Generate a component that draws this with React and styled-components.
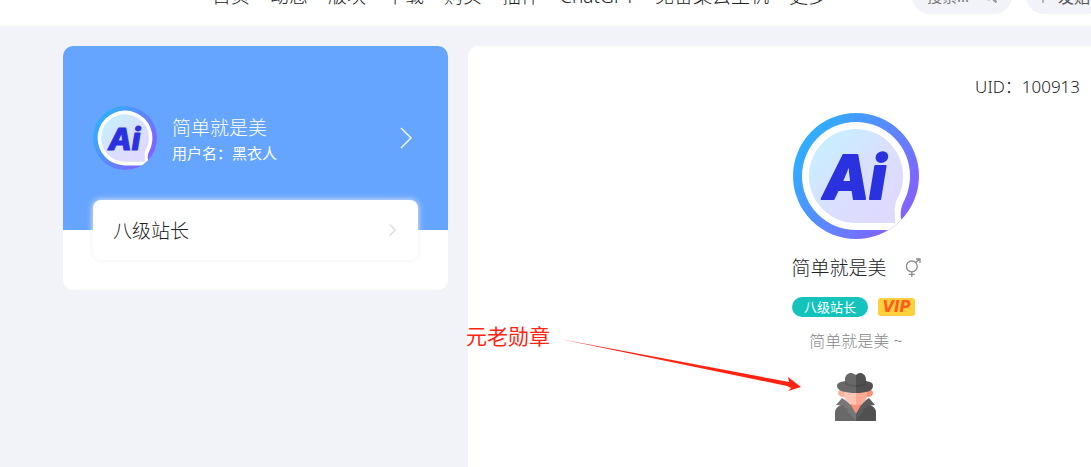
import React from 'react';
import styled, { createGlobalStyle } from 'styled-components';
import { FaSearch } from 'react-icons/fa';
import { BsFlag } from 'react-icons/bs';

const NAV = ['首页', '动态', '版块', '下载', '购买', '插件', 'ChatGPT', '免备案云主机', '更多'];

export default function App() {
    return (
        <Page>
            <GlobalStyle />
            <Header>
                <Nav>
                    {NAV.map((name) => (
                        <NavLink href="#" key={name}>
                            {name}
                        </NavLink>
                    ))}
                </Nav>
                <SearchBox>
                    <SearchInput type="text" placeholder="搜索..." aria-label="搜索" />
                    <FaSearch size="14px" />
                </SearchBox>
                <PostButton type="button">
                    <BsFlag size="13px" />
                    发贴
                </PostButton>
            </Header>
            <Main>
                <UserCard>
                    <UserTop href="#">
                        <Avatar size={64} id="small" />
                        <UserText>
                            <UserName>简单就是美</UserName>
                            <UserAccount>用户名：黑衣人</UserAccount>
                        </UserText>
                        <Chevron width={12} height={22} color="#fff" />
                    </UserTop>
                    <LevelLink href="#">
                        八级站长
                        <Chevron width={7} height={12} color="#ddd" />
                    </LevelLink>
                </UserCard>
                <Profile>
                    <Uid>UID：100913</Uid>
                    <Avatar size={126} id="large" />
                    <NameRow>
                        简单就是美
                        <GenderIcon />
                    </NameRow>
                    <BadgeRow>
                        <Level>八级站长</Level>
                        <Vip>VIP</Vip>
                    </BadgeRow>
                    <Signature>简单就是美 ~</Signature>
                    <Medal />
                    <Note>
                        元老勋章
                        <Arrow />
                    </Note>
                </Profile>
            </Main>
        </Page>
    );
}

function Avatar({ size, id }) {
    return (
        <svg width={size} height={size} viewBox="0 0 126 126" role="img" aria-label="头像">
            <defs>
                <linearGradient id={`ring-${id}`} x1="0.1" y1="0.2" x2="0.9" y2="0.75">
                    <stop offset="0" stopColor="#2fafff" />
                    <stop offset="0.55" stopColor="#5d86ff" />
                    <stop offset="1" stopColor="#8163ff" />
                </linearGradient>
                <linearGradient id={`face-${id}`} x1="0.1" y1="0.1" x2="0.8" y2="0.8">
                    <stop offset="0" stopColor="#c6f0ff" />
                    <stop offset="0.6" stopColor="#d9dfff" />
                    <stop offset="1" stopColor="#dedaff" />
                </linearGradient>
                <clipPath id={`clip-${id}`}>
                    <circle cx="63" cy="63" r="63" />
                </clipPath>
            </defs>
            <g clipPath={`url(#clip-${id})`}>
                <rect width="126" height="126" fill={`url(#ring-${id})`} />
                <path
                    d="M63 9A54 54 0 0 0 63 117H112L108 105C107 97 109 92 112 86C115 80 117 71 117 63A54 54 0 0 0 63 9Z"
                    fill="#fff"
                />
                <path
                    d="M63 16A47 47 0 0 0 63 110H102V101C101 93 103 88 106 82C109 76 110 70 110 63A47 47 0 0 0 63 16Z"
                    fill={`url(#face-${id})`}
                />
                <LogoText x="30" y="86">
                    Ai
                </LogoText>
            </g>
        </svg>
    );
}

function Chevron({ width, height, color }) {
    return (
        <svg width={width} height={height} viewBox="0 0 12 22" fill="none" stroke={color} strokeWidth="1.4">
            <path d="M1 1L11 11L1 21" vectorEffect="non-scaling-stroke" />
        </svg>
    );
}

function GenderIcon() {
    return (
        <svg width="16" height="20" viewBox="0 0 16 20" fill="none" stroke="#8c8c8c" strokeWidth="1.3">
            <circle cx="6.8" cy="8.4" r="5.4" />
            <path d="M10.6 4.6L14.6 1.2M11 1H15V5M6.8 13.8V19M3.8 16.4H9.8" />
        </svg>
    );
}

function Medal() {
    return (
        <svg width="42" height="48" viewBox="0 0 42 48" role="img" aria-label="元老勋章">
            <path d="M0 48V40C0 36 2 34 6 32L12 29L21 40V48Z" fill="#686868" />
            <path d="M41 48V40C41 36 39 34 35 32L29 29L21 40V48Z" fill="#505050" />
            <ellipse cx="8" cy="20" rx="5" ry="4" fill="#ffb09b" />
            <ellipse cx="33" cy="20" rx="5" ry="4" fill="#fb8f78" />
            <path d="M15 28H27L26 33L21 41L16 33Z" fill="#fb8f78" />
            <path d="M9 15H21V32C14 32 9 27 9 22Z" fill="#ffc4b3" />
            <path d="M32 15H21V32C27 32 32 27 32 22Z" fill="#ffaa94" />
            <path d="M7 25L10 27L16 32L21 41V47L12 38L14 36L9 35L10 33L1 32Z" fill="#777" />
            <path d="M34 25L31 27L26 32L21 41V47L29 38L27 36L32 35L31 33L40 32Z" fill="#5c5c5c" />
            <path d="M2 13C2 10 5 9 10 8V7C10 2 13 0 16 0C18 0 19 1 21 2V20C11 20 2 18 2 13Z" fill="#686868" />
            <path d="M38 13C38 10 36 9 31 8V7C31 2 28 0 25 0C23 0 22 1 21 2V20C31 20 38 18 38 13Z" fill="#505050" />
            <path d="M10 8C13 11 17 12 21 12V14C16 14 12 13 10 11Z" fill="#5c5c5c" />
            <path d="M31 8C28 11 25 12 21 12V14C26 14 29 13 31 11Z" fill="#474747" />
        </svg>
    );
}

function Arrow() {
    return (
        <svg width="242" height="54" viewBox="0 0 242 54" fill="#ff2412">
            <path d="M0 0L229 43L228 38L241 48L228 52L231 49L227 47Z" />
        </svg>
    );
}

const GlobalStyle = createGlobalStyle`
    * {
        box-sizing: border-box;
    }
    body {
        margin: 0;
        overflow: hidden;
        background: #f2f3f8;
        color: #222;
        font-family: 'Noto Sans', 'Noto Sans CJK SC', sans-serif;
    }
    a {
        color: inherit;
        text-decoration: none;
    }
    svg {
        display: block;
        flex: none;
    }
`;

const Page = styled.div`
    display: flex;
    flex-direction: column;
    min-height: 100vh;
`;

const Header = styled.header`
    display: flex;
    align-items: center;
    height: 60px;
    margin-top: -34px;
    padding-left: 212px;
    background: #fff;
    white-space: nowrap;
`;

const Nav = styled.nav`
    display: flex;
    flex: none;
    gap: 20px;
    width: 700px;
`;

const NavLink = styled.a`
    font-size: 19px;
    font-weight: 300;
    line-height: 28px;
`;

const SearchBox = styled.div`
    display: flex;
    flex: none;
    align-items: center;
    width: 100px;
    height: 36px;
    margin-right: 14px;
    padding: 0 15px;
    border-radius: 18px;
    background: #f2f3f8;
    color: #999;
`;

const SearchInput = styled.input`
    flex: 1;
    min-width: 0;
    padding: 0;
    border: none;
    background: none;
    font-family: inherit;
    font-size: 15px;
    &::placeholder {
        color: #777;
    }
`;

const PostButton = styled.button`
    display: flex;
    flex: none;
    align-items: center;
    gap: 4px;
    height: 36px;
    padding: 0 15px;
    border: none;
    border-radius: 18px;
    background: #f2f3f8;
    color: #555;
    font-family: inherit;
    font-size: 16px;
`;

const Main = styled.main`
    display: grid;
    flex: 1;
    grid-template-columns: 385px minmax(776px, 1fr);
    align-items: start;
    gap: 20px;
    padding: 20px 63px 0;
`;

const UserCard = styled.aside`
    padding-bottom: 30px;
    border-radius: 10px;
    background: #fff;
    overflow: hidden;
`;

const UserTop = styled.a`
    display: flex;
    align-items: center;
    height: 184px;
    padding: 0 36px 0 30px;
    background: #66a5ff;
    color: #fff;
`;

const UserText = styled.div`
    flex: 1;
    margin-left: 15px;
    padding-top: 4px;
`;

const UserName = styled.div`
    font-size: 19px;
    font-weight: 300;
    line-height: 26px;
`;

const UserAccount = styled.div`
    font-size: 15px;
    line-height: 24px;
`;

const LevelLink = styled.a`
    display: flex;
    align-items: center;
    justify-content: space-between;
    height: 60px;
    margin: -30px 30px 0;
    padding: 0 22px 0 20px;
    border-radius: 8px;
    background: #fff;
    box-shadow: 0 0 6px #eee;
    font-size: 19px;
    font-weight: 300;
`;

const Profile = styled.section`
    position: relative;
    display: flex;
    flex-direction: column;
    align-items: center;
    min-height: 480px;
    padding-top: 29px;
    border-radius: 10px;
    background: #fff;
`;

const Uid = styled.div`
    align-self: flex-end;
    margin: 0 164px 14px;
    font-size: 17px;
    font-weight: 300;
    line-height: 24px;
`;

const NameRow = styled.h1`
    display: flex;
    align-items: center;
    gap: 18px;
    margin: 15px 0 14px;
    font-size: 19px;
    font-weight: 300;
    line-height: 28px;
`;

const BadgeRow = styled.div`
    display: flex;
    align-items: center;
    gap: 10px;
    height: 22px;
    margin-right: 5px;
`;

const Level = styled.span`
    padding: 0 12px;
    border-radius: 10px;
    background: #14c4bc;
    color: #fff;
    font-size: 13px;
    line-height: 20px;
`;

const Vip = styled.span`
    width: 37px;
    border-radius: 3px;
    background: #ffd03b;
    color: #ff5a1f;
    font-family: 'DejaVu Sans', sans-serif;
    font-size: 15px;
    font-style: italic;
    font-weight: 700;
    line-height: 18px;
    text-align: center;
`;

const Signature = styled.p`
    margin: 11px 0 20px;
    color: #888;
    font-size: 16px;
    font-weight: 300;
    line-height: 24px;
`;

/* handwritten pointer laid over the card */
const Note = styled.div`
    position: absolute;
    top: 275px;
    left: -2px;
    display: flex;
    gap: 10px;
    color: #ff2412;
    font-size: 21px;
    line-height: 30px;
    white-space: nowrap;

    svg {
        margin-top: 18px;
    }
`;

const LogoText = styled.text`
    fill: #2a32e0;
    stroke: #2a32e0;
    stroke-width: 2px;
    stroke-linejoin: round;
    font-family: Inter, sans-serif;
    font-size: 60px;
    font-style: italic;
    font-weight: 800;
`;
